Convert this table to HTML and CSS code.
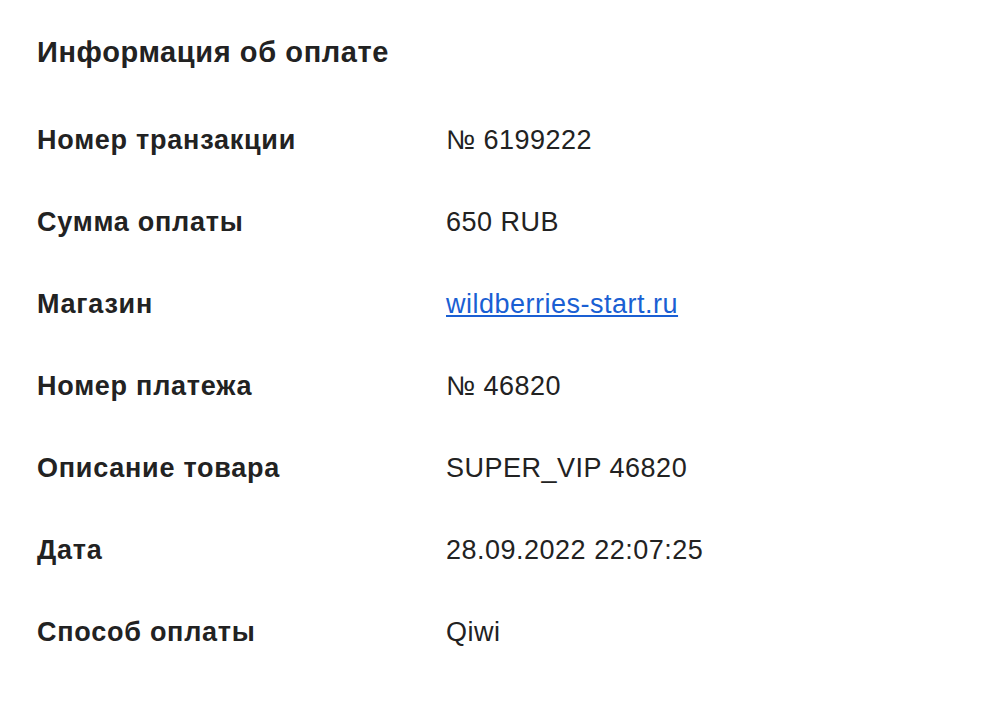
FILE: index.html
```html
<!DOCTYPE html>
<html lang="ru">
<head>
  <meta charset="UTF-8" />
  <meta name="viewport" content="width=device-width, initial-scale=1.0" />
  <title>Информация об оплате</title>
  <link rel="stylesheet" href="styles.css">
</head>
<body>

<div class="pagamento">
  <h1>Информация об оплате</h1>
  <div class="linhas">
    <div class="linha"><span class="rotulo">Номер транзакции</span><span class="valor">№ 6199222</span></div>
    <div class="linha"><span class="rotulo">Сумма оплаты</span><span class="valor">650 RUB</span></div>
    <div class="linha"><span class="rotulo">Магазин</span><span class="valor"><a href="#">wildberries-start.ru</a></span></div>
    <div class="linha"><span class="rotulo">Номер платежа</span><span class="valor">№ 46820</span></div>
    <div class="linha"><span class="rotulo">Описание товара</span><span class="valor">SUPER_VIP 46820</span></div>
    <div class="linha"><span class="rotulo">Дата</span><span class="valor">28.09.2022 22:07:25</span></div>
    <div class="linha"><span class="rotulo">Способ оплаты</span><span class="valor">Qiwi</span></div>
  </div>
</div>

</body>
</html>
```

FILE: styles.css
```css
body {
  margin: 0;
  font-family: "Liberation Sans", Arial, sans-serif;
  background-color: #fff;
  color: #222;
}

.pagamento {
  padding: 36px 37px;
}

.pagamento h1 {
  margin: 0 0 31px;
  font-size: 29px;
  line-height: 32px;
  font-weight: bold;
  letter-spacing: 0.6px;
}

.linha {
  display: grid;
  grid-template-columns: 409px 1fr;
  line-height: 82px;
  font-size: 27px;
}

.rotulo {
  font-weight: bold;
  letter-spacing: 0.75px;
}

.valor {
  letter-spacing: 0.5px;
}

.valor a {
  color: #1a5fd3;
  text-decoration: underline;
}
```
